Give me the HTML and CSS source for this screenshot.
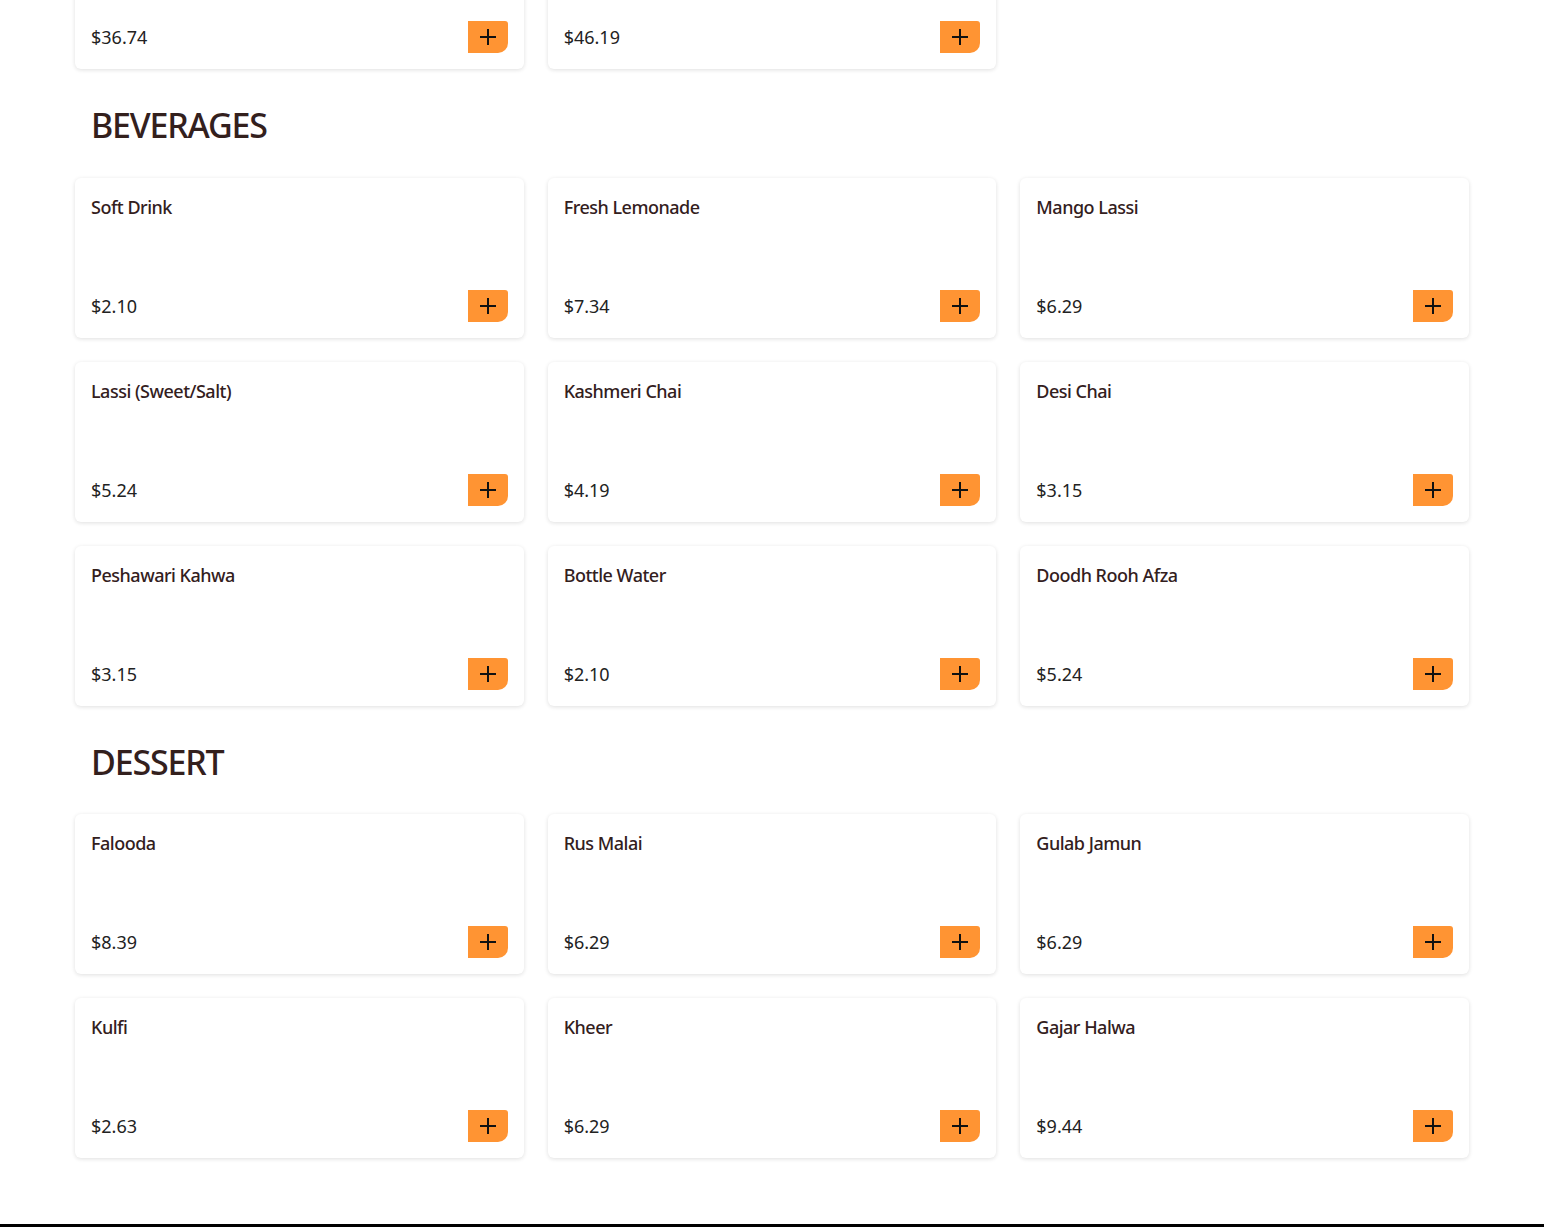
FILE: index.html
```html
<!DOCTYPE html>
<html lang="en">
<head>
<meta charset="utf-8">
<title>Menu</title>
<link rel="stylesheet" href="styles.css">
</head>
<body>
<main class="menu">
  <section class="category category-first">
    <div class="grid">
      <div class="card card-partial"><div class="card-foot"><span class="price">$36.74</span><button class="add" aria-label="Add"><svg viewBox="0 0 20 20" width="20" height="20"><path d="M10 2v16M2 10h16" stroke="#111" stroke-width="2" fill="none"/></svg></button></div></div>
      <div class="card card-partial"><div class="card-foot"><span class="price">$46.19</span><button class="add" aria-label="Add"><svg viewBox="0 0 20 20" width="20" height="20"><path d="M10 2v16M2 10h16" stroke="#111" stroke-width="2" fill="none"/></svg></button></div></div>
    </div>
  </section>

  <section class="category">
    <h2 class="category-title">BEVERAGES</h2>
    <div class="grid">
      <div class="card"><h3 class="item-name">Soft Drink</h3><div class="card-foot"><span class="price">$2.10</span><button class="add" aria-label="Add"><svg viewBox="0 0 20 20" width="20" height="20"><path d="M10 2v16M2 10h16" stroke="#111" stroke-width="2" fill="none"/></svg></button></div></div>
      <div class="card"><h3 class="item-name">Fresh Lemonade</h3><div class="card-foot"><span class="price">$7.34</span><button class="add" aria-label="Add"><svg viewBox="0 0 20 20" width="20" height="20"><path d="M10 2v16M2 10h16" stroke="#111" stroke-width="2" fill="none"/></svg></button></div></div>
      <div class="card"><h3 class="item-name">Mango Lassi</h3><div class="card-foot"><span class="price">$6.29</span><button class="add" aria-label="Add"><svg viewBox="0 0 20 20" width="20" height="20"><path d="M10 2v16M2 10h16" stroke="#111" stroke-width="2" fill="none"/></svg></button></div></div>
      <div class="card"><h3 class="item-name">Lassi (Sweet/Salt)</h3><div class="card-foot"><span class="price">$5.24</span><button class="add" aria-label="Add"><svg viewBox="0 0 20 20" width="20" height="20"><path d="M10 2v16M2 10h16" stroke="#111" stroke-width="2" fill="none"/></svg></button></div></div>
      <div class="card"><h3 class="item-name">Kashmeri Chai</h3><div class="card-foot"><span class="price">$4.19</span><button class="add" aria-label="Add"><svg viewBox="0 0 20 20" width="20" height="20"><path d="M10 2v16M2 10h16" stroke="#111" stroke-width="2" fill="none"/></svg></button></div></div>
      <div class="card"><h3 class="item-name">Desi Chai</h3><div class="card-foot"><span class="price">$3.15</span><button class="add" aria-label="Add"><svg viewBox="0 0 20 20" width="20" height="20"><path d="M10 2v16M2 10h16" stroke="#111" stroke-width="2" fill="none"/></svg></button></div></div>
      <div class="card"><h3 class="item-name">Peshawari Kahwa</h3><div class="card-foot"><span class="price">$3.15</span><button class="add" aria-label="Add"><svg viewBox="0 0 20 20" width="20" height="20"><path d="M10 2v16M2 10h16" stroke="#111" stroke-width="2" fill="none"/></svg></button></div></div>
      <div class="card"><h3 class="item-name">Bottle Water</h3><div class="card-foot"><span class="price">$2.10</span><button class="add" aria-label="Add"><svg viewBox="0 0 20 20" width="20" height="20"><path d="M10 2v16M2 10h16" stroke="#111" stroke-width="2" fill="none"/></svg></button></div></div>
      <div class="card"><h3 class="item-name">Doodh Rooh Afza</h3><div class="card-foot"><span class="price">$5.24</span><button class="add" aria-label="Add"><svg viewBox="0 0 20 20" width="20" height="20"><path d="M10 2v16M2 10h16" stroke="#111" stroke-width="2" fill="none"/></svg></button></div></div>
    </div>
  </section>

  <section class="category">
    <h2 class="category-title">DESSERT</h2>
    <div class="grid">
      <div class="card"><h3 class="item-name">Falooda</h3><div class="card-foot"><span class="price">$8.39</span><button class="add" aria-label="Add"><svg viewBox="0 0 20 20" width="20" height="20"><path d="M10 2v16M2 10h16" stroke="#111" stroke-width="2" fill="none"/></svg></button></div></div>
      <div class="card"><h3 class="item-name">Rus Malai</h3><div class="card-foot"><span class="price">$6.29</span><button class="add" aria-label="Add"><svg viewBox="0 0 20 20" width="20" height="20"><path d="M10 2v16M2 10h16" stroke="#111" stroke-width="2" fill="none"/></svg></button></div></div>
      <div class="card"><h3 class="item-name">Gulab Jamun</h3><div class="card-foot"><span class="price">$6.29</span><button class="add" aria-label="Add"><svg viewBox="0 0 20 20" width="20" height="20"><path d="M10 2v16M2 10h16" stroke="#111" stroke-width="2" fill="none"/></svg></button></div></div>
      <div class="card"><h3 class="item-name">Kulfi</h3><div class="card-foot"><span class="price">$2.63</span><button class="add" aria-label="Add"><svg viewBox="0 0 20 20" width="20" height="20"><path d="M10 2v16M2 10h16" stroke="#111" stroke-width="2" fill="none"/></svg></button></div></div>
      <div class="card"><h3 class="item-name">Kheer</h3><div class="card-foot"><span class="price">$6.29</span><button class="add" aria-label="Add"><svg viewBox="0 0 20 20" width="20" height="20"><path d="M10 2v16M2 10h16" stroke="#111" stroke-width="2" fill="none"/></svg></button></div></div>
      <div class="card"><h3 class="item-name">Gajar Halwa</h3><div class="card-foot"><span class="price">$9.44</span><button class="add" aria-label="Add"><svg viewBox="0 0 20 20" width="20" height="20"><path d="M10 2v16M2 10h16" stroke="#111" stroke-width="2" fill="none"/></svg></button></div></div>
    </div>
  </section>
</main>
<footer class="site-footer"></footer>
</body>
</html>
```

FILE: styles.css
```css
* { box-sizing: border-box; }

html, body {
  margin: 0;
  padding: 0;
  background: #ffffff;
  font-family: "Noto Sans", "Open Sans", "Liberation Sans", sans-serif;
  color: #2f1f1c;
}

.menu {
  margin-top: -91px;
  padding: 0 75px 66px;
}

.category-title {
  margin: 35px 0 31.5px;
  padding-left: 16px;
  font-size: 34px;
  line-height: 42px;
  font-weight: 500;
  color: #33201d;
  letter-spacing: -1.2px;
}

.grid {
  display: grid;
  grid-template-columns: repeat(3, 1fr);
  gap: 24px;
}

.card {
  height: 160px;
  padding: 16px;
  background: #fff;
  border-radius: 6px;
  box-shadow: 0 1px 4px rgba(0, 0, 0, 0.13);
  display: flex;
  flex-direction: column;
  justify-content: space-between;
}

.card-partial {
  justify-content: flex-end;
}

.item-name {
  margin: 0;
  font-size: 18px;
  line-height: 1.45;
  font-weight: 500;
  color: #33201d;
  letter-spacing: -0.5px;
}

.card-foot {
  display: flex;
  align-items: center;
  justify-content: space-between;
}

.price {
  font-size: 18px;
  color: #222;
}

.add {
  width: 40px;
  height: 32px;
  border: none;
  padding: 0;
  margin: 0;
  background: #ff9433;
  border-radius: 0 3px 10px 0;
  display: flex;
  align-items: center;
  justify-content: center;
  cursor: pointer;
}

.add svg { display: block; }

.site-footer {
  height: 200px;
  background: #000;
}
```
